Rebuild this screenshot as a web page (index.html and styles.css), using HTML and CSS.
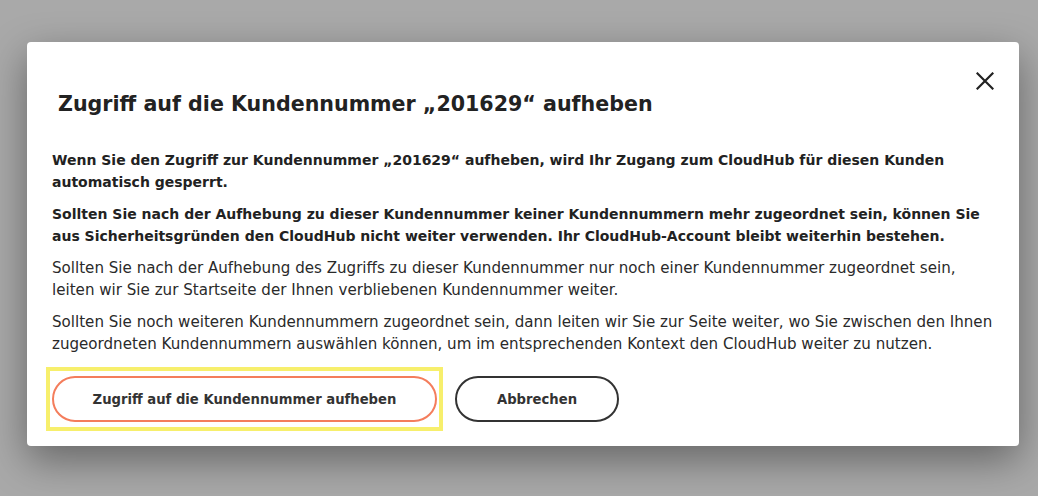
FILE: index.html
```html
<!DOCTYPE html>
<html lang="de">
<head>
<meta charset="utf-8">
<title>Zugriff aufheben</title>
<link rel="stylesheet" href="styles.css">
</head>
<body>
<div class="modal">
  <div class="modal-header">
    <h1 class="modal-title">Zugriff auf die Kundennummer „201629“ aufheben</h1>
    <button class="close" aria-label="Schließen">
      <svg width="18" height="18" viewBox="0 0 18 18"><path d="M1.5 1.5 L16.5 16.5 M16.5 1.5 L1.5 16.5" stroke="#222" stroke-width="2.2" stroke-linecap="square" fill="none"/></svg>
    </button>
  </div>
  <div class="modal-body">
    <p class="strong">Wenn Sie den Zugriff zur Kundennummer „201629“ aufheben, wird Ihr Zugang zum CloudHub für diesen Kunden automatisch gesperrt.</p>
    <p class="strong">Sollten Sie nach der Aufhebung zu dieser Kundennummer keiner Kundennummern mehr zugeordnet sein, können Sie aus Sicherheitsgründen den CloudHub nicht weiter verwenden. Ihr CloudHub-Account bleibt weiterhin bestehen.</p>
    <p>Sollten Sie nach der Aufhebung des Zugriffs zu dieser Kundennummer nur noch einer Kundennummer zugeordnet sein, leiten wir Sie zur Startseite der Ihnen verbliebenen Kundennummer weiter.</p>
    <p>Sollten Sie noch weiteren Kundennummern zugeordnet sein, dann leiten wir Sie zur Seite weiter, wo Sie zwischen den Ihnen zugeordneten Kundennummern auswählen können, um im entsprechenden Kontext den CloudHub weiter zu nutzen.</p>
  </div>
  <div class="modal-footer">
    <div class="focus-ring">
      <button class="btn btn-danger">Zugriff auf die Kundennummer aufheben</button>
    </div>
    <button class="btn btn-secondary">Abbrechen</button>
  </div>
</div>
</body>
</html>
```

FILE: styles.css
```css
* { box-sizing: border-box; }
html, body { margin: 0; padding: 0; }
body {
  background: #a9a9a9;
  font-family: "DejaVu Sans", "Open Sans", sans-serif;
  color: #222;
  height: 496px;
  overflow: hidden;
}
.modal {
  margin: 42px 19px 0 27px;
  background: #fff;
  border-radius: 4px;
  box-shadow: 0 14px 40px rgba(0, 0, 0, 0.4);
  padding: 30px 25px 15px 25px;
}
.modal-header {
  display: flex;
  justify-content: space-between;
  align-items: flex-start;
}
.modal-title {
  margin: 0;
  padding: 18px 0 0 6px;
  font-size: 20.6px;
  line-height: 28px;
  font-weight: 700;
  color: #222;
}
.close {
  border: 0;
  background: none;
  padding: 0;
  width: 18px;
  height: 18px;
  display: block;
  cursor: pointer;
}
.close svg { display: block; }
.modal-body {
  padding-top: 31px;
}
.modal-body p {
  margin: 0 0 10px 0;
  font-size: 15.1px;
  line-height: 22px;
  color: #2a2a2a;
}
.modal-body p:last-child { margin-bottom: 0; }
.modal-body p.strong { font-weight: 700; font-size: 14px; color: #222; }
.modal-footer {
  display: flex;
  align-items: center;
  gap: 12px;
  margin-top: 12px;
  margin-left: -6px;
}
.focus-ring {
  border: 4px solid #f7ef6c;
  padding: 5px 2px;
}
.btn {
  display: block;
  height: 46px;
  border-radius: 23px;
  background: #fff;
  font-family: inherit;
  font-size: 13.2px;
  font-weight: 700;
  color: #333;
  cursor: pointer;
}
.btn-danger {
  width: 385px;
  border: 2px solid #f47d5c;
}
.btn-secondary {
  width: 164px;
  border: 2px solid #333;
}
```
